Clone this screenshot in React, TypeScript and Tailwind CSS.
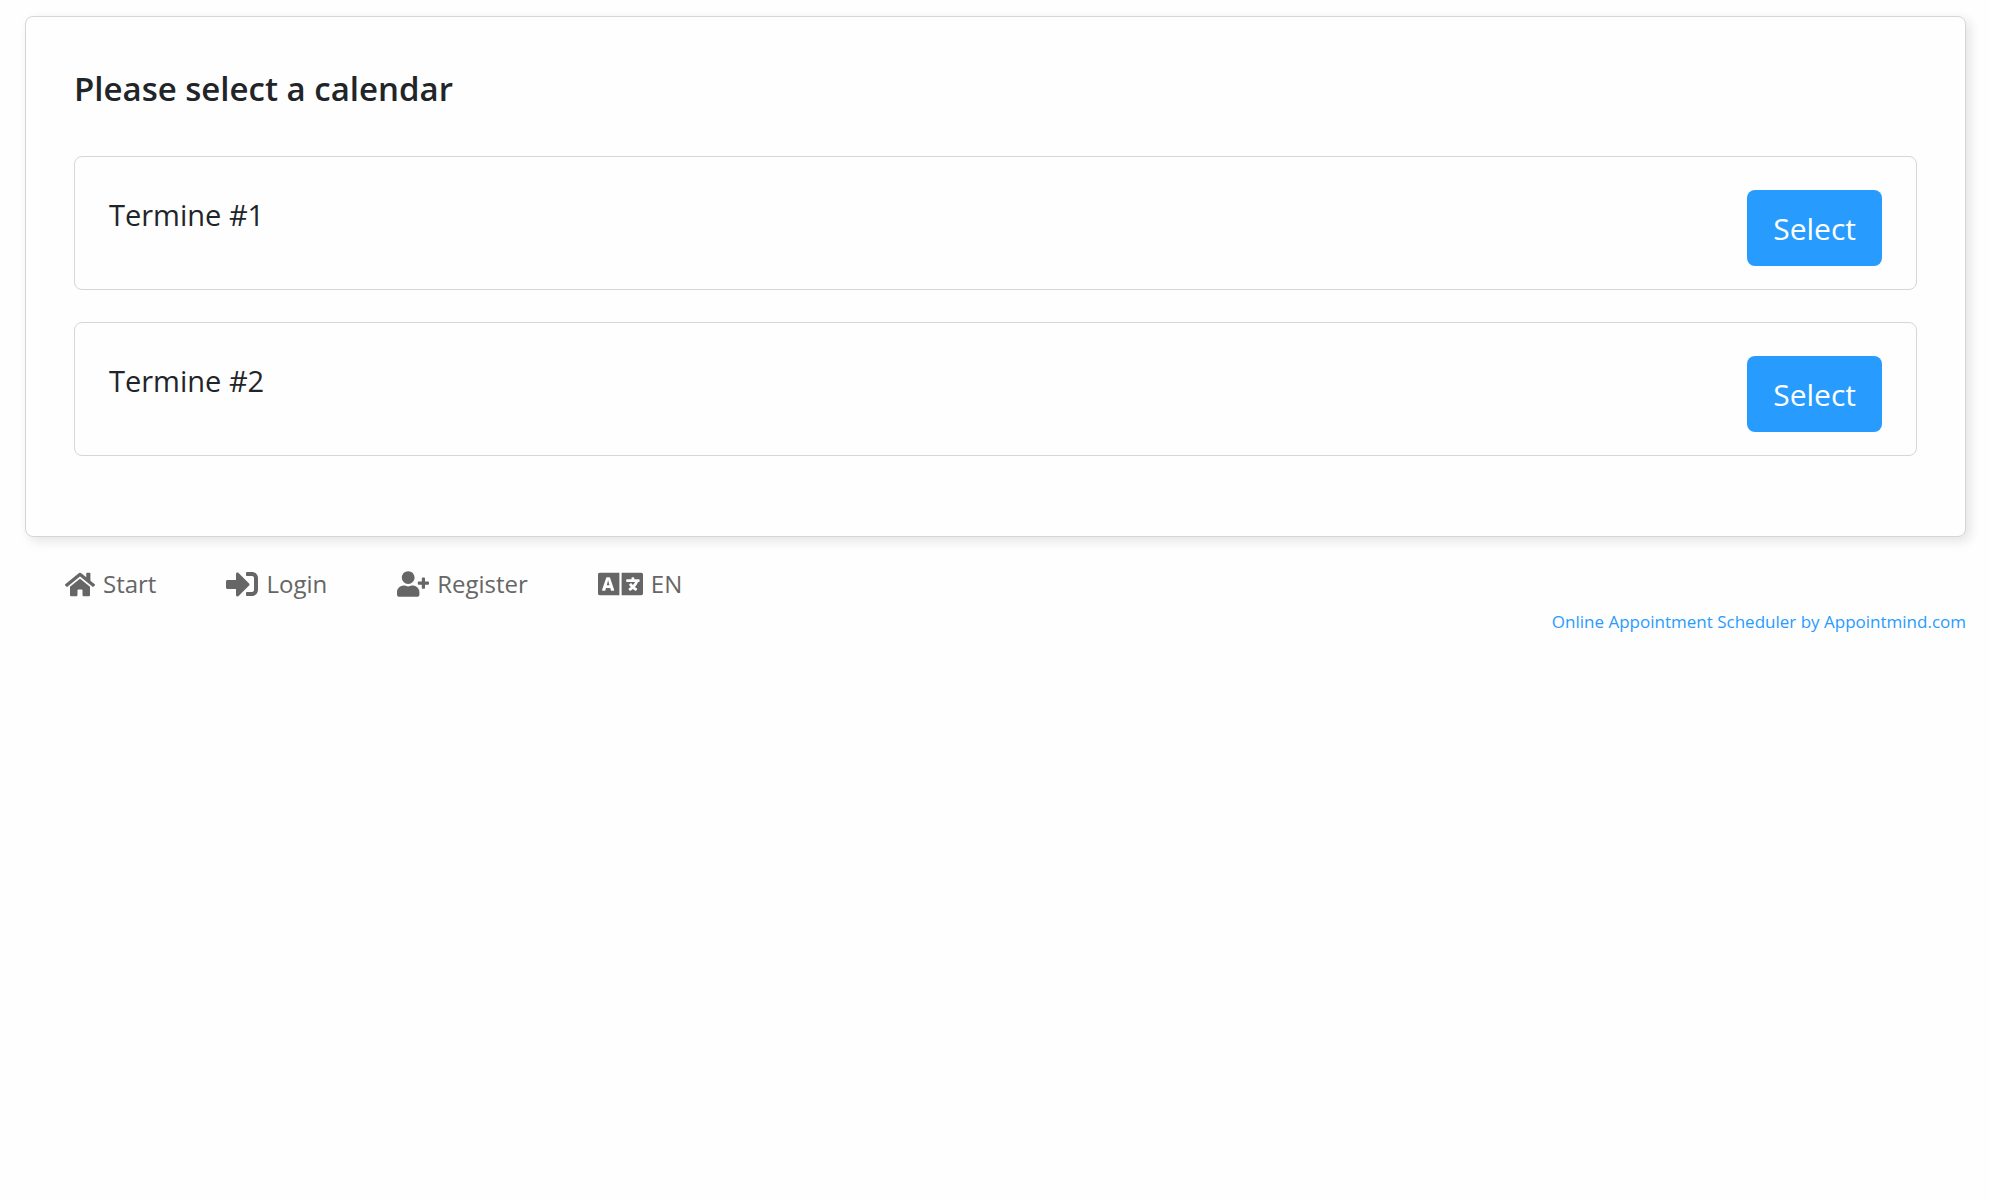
import React from "react";
import { FaHome, FaSignInAlt, FaUserPlus, FaLanguage } from "react-icons/fa";

const calendars = ["Termine #1", "Termine #2"];

export default function App() {
  return (
    <div className="min-h-screen bg-[#fefefe] pt-4 pr-6 pl-[25px] font-['Open_Sans',sans-serif] text-[#212529]">
      <main className="rounded-lg border border-[#d6d6d6] bg-[#fefefe] px-12 pt-12 pb-20 shadow-[4px_4px_12px_rgba(0,0,0,0.11)]">
        <h1 className="text-[33px] leading-[47px] font-semibold">Please select a calendar</h1>
        <ul className="mt-11 flex flex-col gap-8">
          {calendars.map((name) => (
            <li
              key={name}
              className="flex items-start justify-between rounded-lg border border-[#d6d6d6] px-[34px] pt-[33px] pb-[23px]"
            >
              <span className="text-[29px] leading-[50px]">{name}</span>
              <button type="button" className="rounded-lg bg-[#289bff] px-[26px] pt-[14px] pb-3 text-[30px] leading-[50px] text-white">
                Select
              </button>
            </li>
          ))}
        </ul>
      </main>
      <nav className="mt-[29px] flex flex-wrap items-center gap-x-[70px] px-10 text-[24px] leading-9 text-[#666]">
        <a href="#start" className="flex items-center gap-2">
          <FaHome className="h-[27px] w-[30px]" aria-hidden="true" />
          Start
        </a>
        <a href="#login" className="flex items-center gap-2">
          <FaSignInAlt className="size-8" aria-hidden="true" />
          Login
        </a>
        <a href="#register" className="flex items-center gap-2">
          <FaUserPlus className="h-[26px] w-8" aria-hidden="true" />
          Register
        </a>
        <a href="#language" className="flex items-center gap-2">
          <FaLanguage className="h-9 w-[45px]" aria-hidden="true" />
          EN
        </a>
      </nav>
      <footer className="mt-2 text-right text-[17px] leading-6">
        <a href="#appointmind" className="text-[#289bff]">
          Online Appointment Scheduler by Appointmind.com
        </a>
      </footer>
    </div>
  );
}
